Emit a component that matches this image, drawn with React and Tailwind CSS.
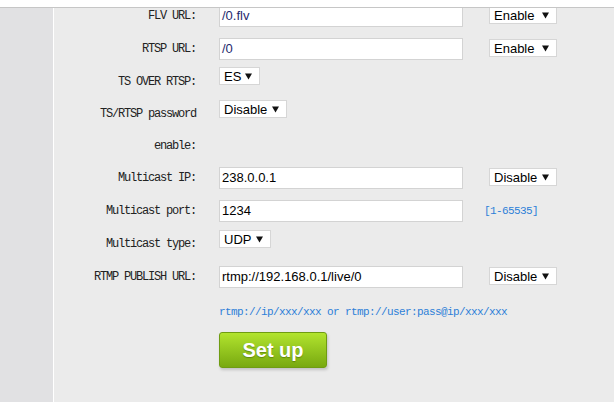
const labelFont = { fontFamily: '"Liberation Mono", "Courier New", Cousine, "Liberation Serif", serif' };
const fieldFont = { fontFamily: '"Liberation Sans", Arial, sans-serif' };

const Arrow = () => (
    <svg width="7" height="7" viewBox="0 0 7 7" className="shrink-0">
        <polygon points="0,0.5 7,0.5 3.5,6.5" fill="#111" />
    </svg>
);

const Select = ({ value, width, className = '' }) => (
    <div
        className={`flex items-center justify-between h-[18px] bg-white border border-[#d6d6d6] pl-[4px] pr-[7px] text-[13px] text-black leading-none ${width} ${className}`}
        style={fieldFont}
    >
        <span>{value}</span>
        <Arrow />
    </div>
);

const TextInput = ({ value, color = 'text-black' }) => (
    <div
        className={`mt-[5px] w-[244px] h-[22px] bg-white border border-[#d3d3d3] flex items-center pl-[2px] text-[13px] ${color}`}
        style={fieldFont}
    >
        {value}
    </div>
);

const Row = ({ label, h = 'h-[33px]', children }) => (
    <div className={`flex ${h}`}>
        <div
            className="w-[143px] shrink-0 text-right text-[12px] tracking-[-1.2px] leading-[33px] text-[#222] pr-[1px]"
            style={labelFont}
        >
            {label}
        </div>
        <div className="ml-[22px] flex items-start">{children}</div>
    </div>
);

const App = () => {
    return (
        <div className="w-[614px] h-[402px] overflow-hidden flex flex-col bg-[#ebebeb]">
            {/* top strip */}
            <div className="h-[8px] shrink-0 bg-white border-b border-[#c6c6c6]" />

            <div className="flex flex-1 min-h-0">
                <div className="w-[54px] shrink-0 bg-[#e1e1e3] border-r border-white" />

                <div className="flex-1 overflow-hidden">
                    <div className="-mt-[8px] flex flex-col">
                        <Row label="FLV URL:">
                            <TextInput value="/0.flv" color="text-[#1f2a6e]" />
                            <Select value="Enable" width="w-[68px]" className="ml-[26px] mt-[6px]" />
                        </Row>
                        <Row label="RTSP URL:">
                            <TextInput value="/0" color="text-[#1f2a6e]" />
                            <Select value="Enable" width="w-[68px]" className="ml-[26px] mt-[6px]" />
                        </Row>
                        <Row label="TS OVER RTSP:" h="h-[32px]">
                            <Select value="ES" width="w-[41px]" className="mt-[1px]" />
                        </Row>
                        <div className="flex h-[64px]">
                            <div
                                className="w-[143px] shrink-0 text-right text-[12px] tracking-[-1.2px] leading-[32px] text-[#222] pr-[1px]"
                                style={labelFont}
                            >
                                TS/RTSP password<br />enable:
                            </div>
                            <div className="ml-[22px]">
                                <Select value="Disable" width="w-[68px]" className="mt-[2px]" />
                            </div>
                        </div>
                        <Row label="Multicast IP:">
                            <TextInput value="238.0.0.1" />
                            <Select value="Disable" width="w-[68px]" className="ml-[26px] mt-[6px]" />
                        </Row>
                        <Row label="Multicast port:">
                            <TextInput value="1234" />
                            <span
                                className="ml-[21px] leading-[33px] text-[11px] tracking-[-0.6px] text-[#2d7fd8]"
                                style={labelFont}
                            >
                                [1-65535]
                            </span>
                        </Row>
                        <Row label="Multicast type:">
                            <Select value="UDP" width="w-[52px]" className="mt-[2px]" />
                        </Row>
                        <Row label="RTMP PUBLISH URL:">
                            <TextInput value="rtmp://192.168.0.1/live/0" />
                            <Select value="Disable" width="w-[68px]" className="ml-[26px] mt-[6px]" />
                        </Row>

                        <div className="ml-[165px] flex flex-col items-start">
                            <div
                                className="mt-[12px] leading-[12px] text-[11px] tracking-[-0.6px] text-[#2d7fd8]"
                                style={labelFont}
                            >
                                rtmp://ip/xxx/xxx or rtmp://user:pass@ip/xxx/xxx
                            </div>
                            <button
                                className="mt-[14px] w-[108px] h-[36px] rounded-[3px] border border-[#6f9c12] bg-gradient-to-b from-[#b2e42e] to-[#78a90f] text-white text-[20px] font-bold shadow-[1px_2px_3px_rgba(0,0,0,0.18)] [text-shadow:0_1px_1px_rgba(60,90,0,0.5)]"
                                style={fieldFont}
                            >
                                Set up
                            </button>
                        </div>
                    </div>
                </div>
            </div>
        </div>
    );
};

export default App;
